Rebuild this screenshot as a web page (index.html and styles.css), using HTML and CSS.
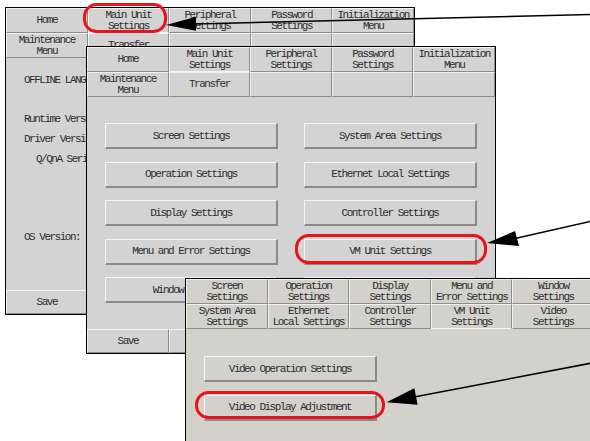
FILE: index.html
```html
<html>
<head>
  <title>Main Unit Settings</title>
  <link rel="stylesheet" href="styles.css">
</head>
<body>
  <div class="desk">

    <section class="win win-back">
      <div class="tabs">
        <div class="tab">Home</div>
        <div class="tab on">Main Unit<br>Settings</div>
        <div class="tab">Peripheral<br>Settings</div>
        <div class="tab">Password<br>Settings</div>
        <div class="tab">Initialization<br>Menu</div>
        <div class="tab">Maintenance<br>Menu</div>
        <div class="tab">Transfer</div>
        <div class="tab"></div>
        <div class="tab"></div>
        <div class="tab"></div>
      </div>
      <div class="pane info">
        <p class="lang">OFFLINE LANGUAGE: English</p>
        <p class="runtime">Runtime Version: 1.00</p>
        <p>Driver Version: 1.00</p>
        <p class="sub">Q/QnA Serial</p>
        <p class="os">OS Version:</p>
      </div>
      <div class="foot">
        <div class="tab">Save</div>
        <div class="tab"></div>
        <div class="tab"></div>
        <div class="tab"></div>
        <div class="tab"></div>
      </div>
    </section>

    <section class="win win-mid">
      <div class="tabs">
        <div class="tab">Home</div>
        <div class="tab on">Main Unit<br>Settings</div>
        <div class="tab">Peripheral<br>Settings</div>
        <div class="tab">Password<br>Settings</div>
        <div class="tab">Initialization<br>Menu</div>
        <div class="tab">Maintenance<br>Menu</div>
        <div class="tab">Transfer</div>
        <div class="tab"></div>
        <div class="tab"></div>
        <div class="tab"></div>
      </div>
      <div class="pane buttons two">
        <div class="btn">Screen Settings</div>
        <div class="btn">System Area Settings</div>
        <div class="btn">Operation Settings</div>
        <div class="btn">Ethernet Local Settings</div>
        <div class="btn">Display Settings</div>
        <div class="btn">Controller Settings</div>
        <div class="btn">Menu and Error Settings</div>
        <div class="btn">VM Unit Settings</div>
        <div class="btn">Window Settings</div>
        <div class="btn">Video Settings</div>
      </div>
      <div class="foot">
        <div class="tab">Save</div>
        <div class="tab"></div>
        <div class="tab"></div>
        <div class="tab"></div>
        <div class="tab"></div>
      </div>
    </section>

    <section class="win win-front">
      <div class="tabs">
        <div class="tab">Screen<br>Settings</div>
        <div class="tab">Operation<br>Settings</div>
        <div class="tab">Display<br>Settings</div>
        <div class="tab">Menu and<br>Error Settings</div>
        <div class="tab">Window<br>Settings</div>
        <div class="tab">System Area<br>Settings</div>
        <div class="tab">Ethernet<br>Local Settings</div>
        <div class="tab">Controller<br>Settings</div>
        <div class="tab on">VM Unit<br>Settings</div>
        <div class="tab">Video<br>Settings</div>
      </div>
      <div class="pane buttons one">
        <div class="btn">Video Operation Settings</div>
        <div class="btn">Video Display Adjustment</div>
      </div>
    </section>

    <!-- callouts drawn over the screens -->
    <svg class="marks" width="590" height="441" viewBox="0 0 590 441">
      <g fill="none" stroke="#e8141b" stroke-width="3">
        <rect x="84.5" y="4.5" width="81" height="27" rx="12"/>
        <rect x="296.5" y="235.5" width="189" height="27" rx="12"/>
        <rect x="196.5" y="392.5" width="187" height="25" rx="12"/>
      </g>
      <g stroke="#000" stroke-width="1.5">
        <line x1="592" y1="14.5" x2="194" y2="24"/>
        <line x1="592" y1="221" x2="515" y2="238.5"/>
        <line x1="592" y1="363" x2="414" y2="397"/>
      </g>
      <g fill="#000">
        <polygon points="166,25 196,16.8 196,30.8"/>
        <polygon points="487,243 515,231 519,246"/>
        <polygon points="386.5,402.2 414.4,388.2 417.6,404.8"/>
      </g>
    </svg>

  </div>
</body>
</html>
```

FILE: styles.css
```css
body {
    margin: 0;
    background-color: white;
    overflow: hidden;
    font-family: "Liberation Mono", "DejaVu Sans Mono", monospace;
    font-size: 11px;
    letter-spacing: -1.5px;
    color: #2e2e2e;
}

.desk {
    position: relative;
    width: 590px;
    height: 441px;
    overflow: hidden;
}

.win {
    position: absolute;
    width: 410px;
    height: 308px;
    box-sizing: border-box;
    border: 1px solid black;
    background-color: #d3d3d3;
    display: flex;
    flex-direction: column;
}

.win-back {
    left: 5px;
    top: 7px;
}

.win-mid {
    left: 86px;
    top: 46px;
}

.win-front {
    left: 185px;
    top: 278px;
    height: 164px;
    background-color: #d4d1cb;
}

.tabs {
    display: grid;
    grid-template-columns: repeat(5, 1fr);
    grid-template-rows: 25px 25px;
}

.tab {
    box-sizing: border-box;
    display: flex;
    align-items: center;
    justify-content: center;
    text-align: center;
    line-height: 11px;
    border-top: 1px solid #f2f2f2;
    border-left: 1px solid #f2f2f2;
    border-right: 1px solid #8c8c8c;
    border-bottom: 1px solid #8c8c8c;
}

.tab.on {
    border-bottom: 1px solid #f6f6f6;
}

.pane {
    flex: 1;
}

.foot {
    display: grid;
    grid-template-columns: repeat(5, 1fr);
    height: 24px;
}

.info p {
    margin: 0;
    padding-left: 18px;
    line-height: 12px;
}

.info .lang {
    margin-top: 16px;
}

.info .runtime {
    margin-top: 27px;
}

.info p + p {
    margin-top: 8px;
}

.info .sub {
    padding-left: 30px;
}

.info .os {
    margin-top: 66px;
}

.buttons {
    display: grid;
    grid-auto-rows: 26px;
    row-gap: 12.5px;
    column-gap: 26px;
    padding-left: 18px;
}

.buttons.two {
    grid-template-columns: 173px 173px;
    padding-top: 26px;
}

.buttons.one {
    grid-template-columns: 173px;
    padding-top: 27px;
}

.btn {
    box-sizing: border-box;
    display: flex;
    align-items: center;
    justify-content: center;
    border-top: 1px solid #f4f4f4;
    border-left: 1px solid #f4f4f4;
    border-right: 2px solid #8a8a8a;
    border-bottom: 2px solid #8a8a8a;
}

.marks {
    position: absolute;
    left: 0;
    top: 0;
}
```
